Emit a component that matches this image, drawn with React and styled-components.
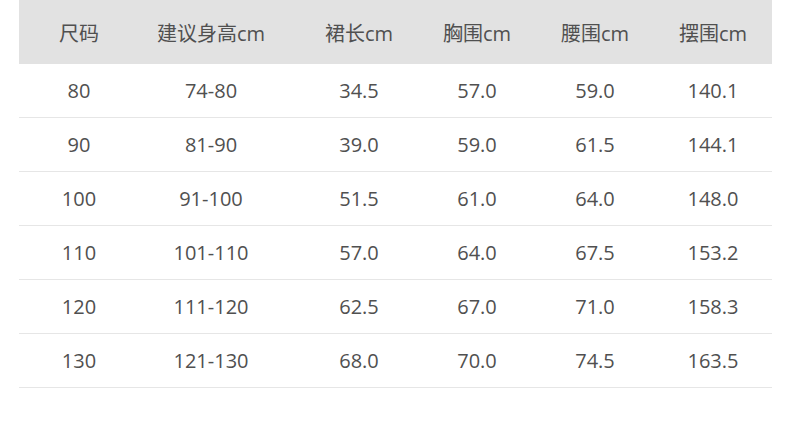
import styled, { createGlobalStyle } from "styled-components";

const GlobalStyle = createGlobalStyle`
  html, body {
    margin: 0;
    padding: 0;
    background: #fff;
  }
`;

const Page = styled.div`
  width: 790px;
  height: 431px;
  padding: 0 18px 0 19px;
  box-sizing: border-box;
  font-family: "Open Sans", "Noto Sans CJK SC", sans-serif;
  color: #505050;
`;

const Row = styled.div`
  display: grid;
  grid-template-columns: 120px 161px repeat(4, 1fr);
  align-items: center;
  height: ${(props) => (props.head ? "64px" : "53px")};
  background: ${(props) => (props.head ? "#e2e2e2" : "transparent")};
  border-bottom: ${(props) => (props.head ? "none" : "1px solid #e6e6e6")};
  font-size: 20px;

  & > :nth-child(2) {
    padding-right: 17px;
  }
`;

const Cell = styled.div`
  text-align: center;
  white-space: nowrap;
`;

const headers = ["尺码", "建议身高cm", "裙长cm", "胸围cm", "腰围cm", "摆围cm"];

const rows = [
  ["80", "74-80", "34.5", "57.0", "59.0", "140.1"],
  ["90", "81-90", "39.0", "59.0", "61.5", "144.1"],
  ["100", "91-100", "51.5", "61.0", "64.0", "148.0"],
  ["110", "101-110", "57.0", "64.0", "67.5", "153.2"],
  ["120", "111-120", "62.5", "67.0", "71.0", "158.3"],
  ["130", "121-130", "68.0", "70.0", "74.5", "163.5"],
];

function App() {
  return (
    <Page>
      <GlobalStyle />
      <Row head>
        {headers.map((h) => (
          <Cell key={h}>{h}</Cell>
        ))}
      </Row>
      {rows.map((r) => (
        <Row key={r[0]}>
          {r.map((v, i) => (
            <Cell key={i}>{v}</Cell>
          ))}
        </Row>
      ))}
    </Page>
  );
}

export default App;
